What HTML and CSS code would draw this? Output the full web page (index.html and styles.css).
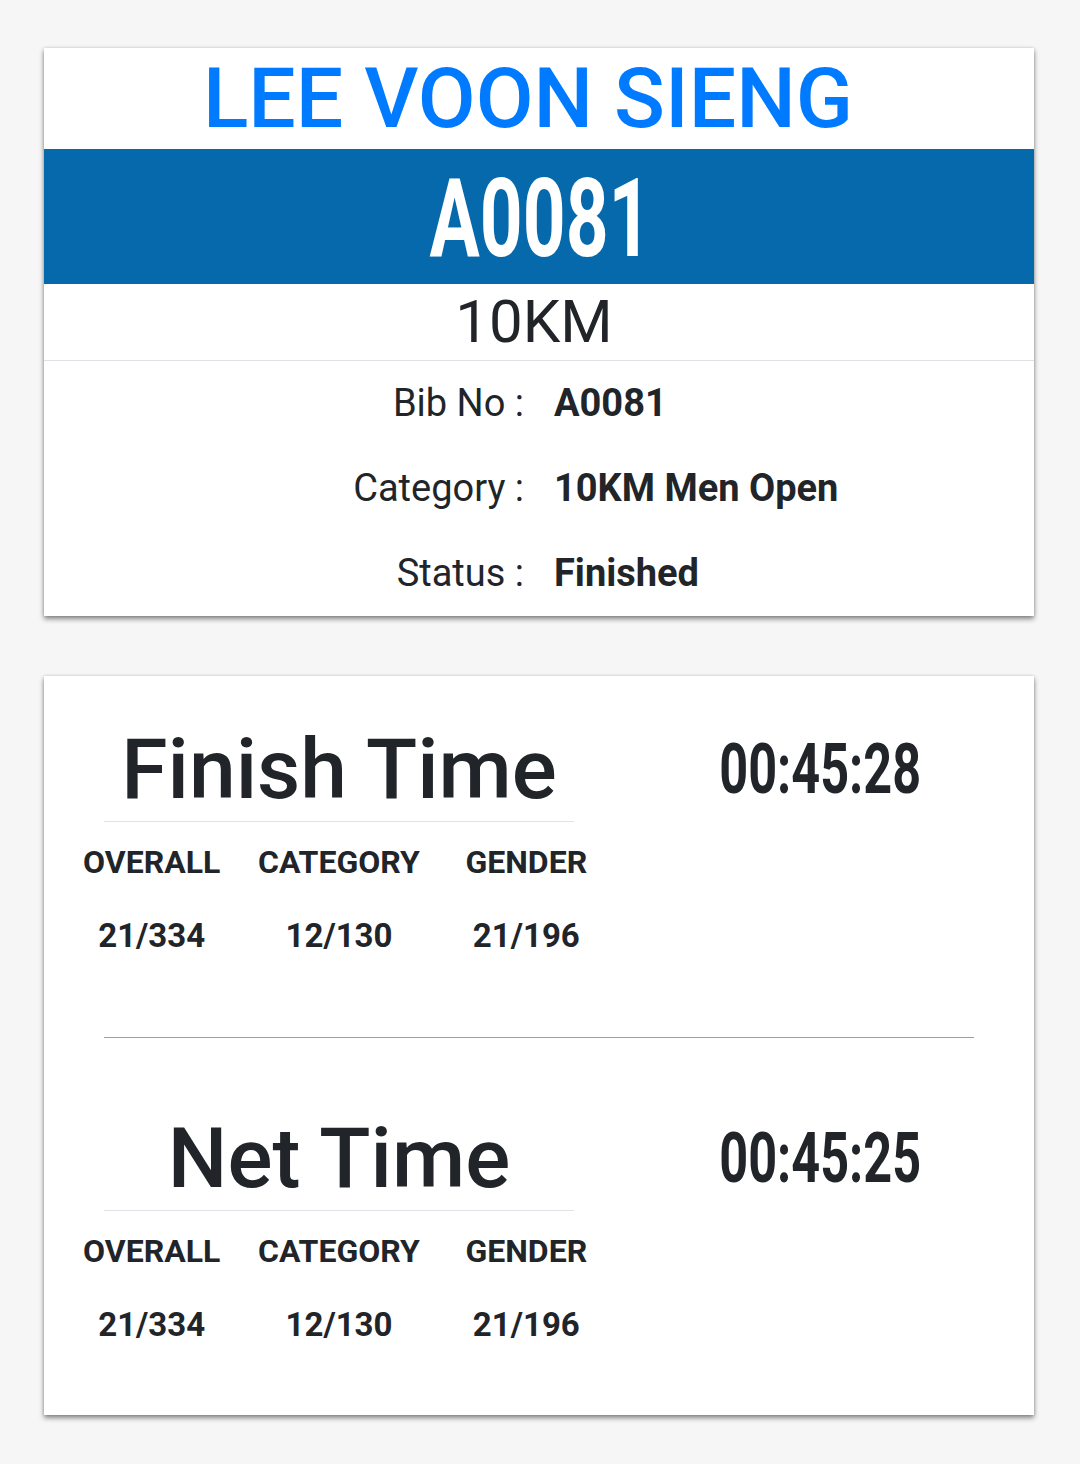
FILE: index.html
```html
<!DOCTYPE html>
<html lang="en">
<head>
    <meta charset="UTF-8">
    <meta name="viewport" content="width=device-width, initial-scale=1.0">
    <title>Race Result - A0081</title>
    <link rel="stylesheet" href="styles.css">
</head>
<body>
    <div class="card bib-card">
        <h1 class="runner-name">LEE VOON SIENG</h1>
        <div class="bib-band"><span class="bib-number">A0081</span></div>
        <div class="race-name">10KM</div>

        <div class="info-row">
            <span class="info-label">Bib No :</span>
            <span class="info-value">A0081</span>
        </div>
        <div class="info-row">
            <span class="info-label">Category :</span>
            <span class="info-value">10KM Men Open</span>
        </div>
        <div class="info-row">
            <span class="info-label">Status :</span>
            <span class="info-value">Finished</span>
        </div>
    </div>

    <div class="card time-card">
        <div class="time-section">
            <div class="time-left">
                <h2 class="time-title">Finish Time</h2>
                <div class="rank-grid">
                    <div class="rank-head">OVERALL</div>
                    <div class="rank-head">CATEGORY</div>
                    <div class="rank-head">GENDER</div>
                    <div class="rank-value">21/334</div>
                    <div class="rank-value">12/130</div>
                    <div class="rank-value">21/196</div>
                </div>
            </div>
            <div class="time-right"><span class="time-value">00:45:28</span></div>
        </div>

        <hr class="time-divider">

        <div class="time-section">
            <div class="time-left">
                <h2 class="time-title">Net Time</h2>
                <div class="rank-grid">
                    <div class="rank-head">OVERALL</div>
                    <div class="rank-head">CATEGORY</div>
                    <div class="rank-head">GENDER</div>
                    <div class="rank-value">21/334</div>
                    <div class="rank-value">12/130</div>
                    <div class="rank-value">21/196</div>
                </div>
            </div>
            <div class="time-right"><span class="time-value">00:45:25</span></div>
        </div>
    </div>
</body>
</html>
```

FILE: styles.css
```css
body {
    font-family: Roboto, "Noto Sans", sans-serif;
    background-color: #f6f6f6;
    color: #212529;
    margin: 0;
    padding: 48px 0 40px;
}

.card {
    background-color: #fff;
    width: 990px;
    margin-left: 44px;
    box-shadow: 0 3px 5px rgba(0, 0, 0, 0.45), 0 0 3px rgba(0, 0, 0, 0.15);
}

/* bib card */

.runner-name {
    margin: 0;
    padding-right: 22px;
    font-size: 84px;
    font-weight: 500;
    line-height: 101px;
    color: #007bff;
    text-align: center;
}

.bib-band {
    background-color: #0669ab;
    height: 135px;
    display: flex;
    align-items: center;
    justify-content: center;
}

.bib-number {
    display: inline-block;
    color: #fff;
    font-size: 110px;
    font-weight: 700;
    line-height: 1;
    padding: 4px 0 0 4px;
    transform: scaleX(0.68);
}

.race-name {
    padding-right: 10px;
    font-size: 60px;
    line-height: 76px;
    text-align: center;
    border-bottom: 1px solid #dee2e6;
}

.info-row {
    display: grid;
    grid-template-columns: 1fr 1fr;
    column-gap: 30px;
    height: 85px;
    line-height: 85px;
    font-size: 38px;
}

.info-label {
    font-weight: 400;
    text-align: right;
}

.info-value {
    font-weight: 700;
}

/* time card */

.time-card {
    margin-top: 60px;
    padding: 42px 0 66px;
}

.time-section {
    display: flex;
    padding: 0 14px;
}

.time-left {
    width: 562px;
}

.time-right {
    width: 400px;
    text-align: center;
}

.time-title {
    margin: 0 46px;
    font-size: 84px;
    font-weight: 500;
    line-height: 103px;
    text-align: center;
    border-bottom: 1px solid #dee2e6;
}

.rank-grid {
    display: grid;
    grid-template-columns: repeat(3, 1fr);
    row-gap: 26px;
    margin-top: 16px;
    text-align: center;
    font-weight: 700;
    line-height: 48px;
}

.rank-head {
    font-size: 32px;
}

.rank-value {
    font-size: 33px;
}

.time-value {
    display: inline-block;
    font-size: 70px;
    font-weight: 700;
    line-height: 103px;
    transform: scaleX(0.72);
}

.time-divider {
    margin: 77px 60px 69px;
    border: 0;
    border-top: 1px solid #9e9e9e;
}
```
